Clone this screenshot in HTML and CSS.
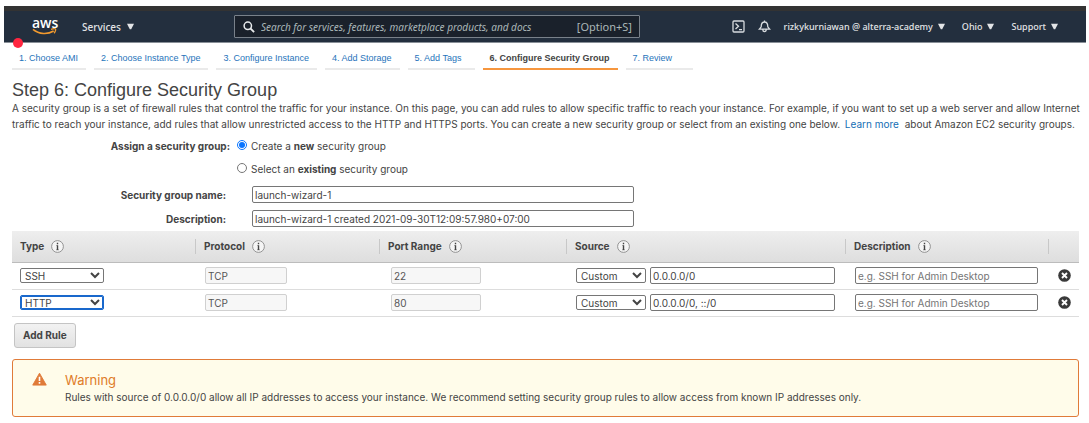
FILE: index.html
```html
<!DOCTYPE html>
<html lang="en">
<head>
<meta charset="utf-8">
<title>Step 6: Configure Security Group</title>
<link rel="stylesheet" href="styles.css">
</head>
<body>
<svg class="defs" aria-hidden="true">
  <symbol id="info" viewBox="0 0 13 13"><circle cx="6.5" cy="6.5" r="5.900" fill="#f5f5f5" stroke="#888" stroke-width=".9"/><path d="M6.500 2.800v1.500M6.500 5.200v4.800" fill="none" stroke="#444" stroke-width="1.400"/><path d="M5.400 5.500h1M5.200 9.800h2.600" stroke="#444" stroke-width=".6"/></symbol>
  <symbol id="remove" viewBox="0 0 13 13"><circle cx="6.5" cy="6.5" r="6.3" fill="#3a3a3a"/><path d="M4 4l5 5M9 4L4 9" stroke="#fff" stroke-width="1.9"/></symbol>
  <symbol id="caret" viewBox="0 0 8 7"><path d="M0 0.3h8L4.8 6.5h-1.6z" fill="#e2e4e6"/></symbol>
</svg>
<header class="topbar">
  <a class="logo" href="#" aria-label="AWS home">
    <span class="logo-text">aws</span>
    <svg class="smile" viewBox="0 0 26 8" aria-hidden="true"><path d="M1 1.2C7.500 6.500 16 6.800 22.500 3" fill="none" stroke="#f29a2e" stroke-width="1.600"/><path d="M19.800 1.300c2-.8 4.300-.9 4.700-.4s-.2 3-1.600 4.400" fill="none" stroke="#f29a2e" stroke-width="1.300"/></svg>
  </a>
  <button class="nav-button services" type="button">Services <svg class="caret" aria-hidden="true"><use href="#caret"/></svg></button>
  <label class="search">
    <svg class="search-icon" viewBox="0 0 12 12" aria-hidden="true"><circle cx="4.800" cy="4.800" r="3.700" fill="none" stroke="#e8eaec" stroke-width="1.500"/><path d="M7.500 7.500l3.600 3.600" stroke="#e8eaec" stroke-width="1.800"/></svg>
    <input class="search-input" type="search" aria-label="Search" placeholder="Search for services, features, marketplace products, and docs">
    <span class="shortcut">[Option+S]</span>
  </label>
  <nav class="account">
    <button class="nav-button" type="button" aria-label="CloudShell"><svg class="tool-icon" viewBox="0 0 13 13" fill="none" stroke="#d8dcdf" stroke-width="1.300" aria-hidden="true"><rect x="1" y="1" width="11" height="11" rx="1"/><path d="M3.500 3.500l3 2.700-3 2.700M7 9.600h3"/></svg></button>
    <button class="nav-button bell" type="button" aria-label="Notifications"><svg class="tool-icon" viewBox="0 0 13 13" fill="none" stroke="#d8dcdf" stroke-width="1.300" aria-hidden="true"><path d="M6.500 0.500v1.500M1.300 9.200h10.400L9.800 6.800C9.800 3.500 8.700 2 6.500 2S3.200 3.500 3.200 6.800zM4.800 9.500c0 2.800 3.400 2.800 3.400 0"/></svg></button>
    <button class="nav-button" type="button">rizkykurniawan @ alterra-academy <svg class="caret" aria-hidden="true"><use href="#caret"/></svg></button>
    <button class="nav-button" type="button">Ohio <svg class="caret" aria-hidden="true"><use href="#caret"/></svg></button>
    <button class="nav-button" type="button">Support <svg class="caret" aria-hidden="true"><use href="#caret"/></svg></button>
  </nav>
  <span class="marker"></span>
</header>
<nav class="steps" aria-label="Launch steps">
  <a class="step" href="#">1. Choose AMI</a>
  <a class="step" href="#">2. Choose Instance Type</a>
  <a class="step" href="#">3. Configure Instance</a>
  <a class="step" href="#">4. Add Storage</a>
  <a class="step" href="#">5. Add Tags</a>
  <a class="step current" href="#" aria-current="step">6. Configure Security Group</a>
  <a class="step" href="#">7. Review</a>
</nav>
<main class="content">
  <h1 class="title">Step 6: Configure Security Group</h1>
  <p class="intro">A security group is a set of firewall rules that control the traffic for your instance. On this page, you can add rules to allow specific traffic to reach your instance. For example, if you want to set up a web server and allow Internet traffic to reach your instance, add rules that allow unrestricted access to the HTTP and HTTPS ports. You can create a new security group or select from an existing one below. <a class="more" href="#">Learn more</a> about Amazon EC2 security groups.</p>
  <form class="group-form">
    <div class="assign" role="radiogroup" aria-labelledby="assign-label">
      <span class="assign-label" id="assign-label">Assign a security group:</span>
      <div class="choices">
        <label class="choice"><input class="radio" type="radio" name="group" checked><span>Create a <b>new</b> security group</span></label>
        <label class="choice"><input class="radio" type="radio" name="group"><span>Select an <b>existing</b> security group</span></label>
      </div>
    </div>
    <div class="field"><label class="field-label" for="name">Security group name:</label><input class="box" id="name" value="launch-wizard-1"></div>
    <div class="field"><label class="field-label" for="desc">Description:</label><input class="box" id="desc" value="launch-wizard-1 created 2021-09-30T12:09:57.980+07:00"></div>
  </form>
  <table class="rules">
    <colgroup><col class="col-type"><col class="col-protocol"><col class="col-port"><col class="col-source"><col class="col-desc"><col class="col-remove"></colgroup>
    <thead>
      <tr>
        <th><span class="head">Type <svg class="icon" aria-hidden="true"><use href="#info"/></svg></span></th>
        <th><span class="head">Protocol <svg class="icon" aria-hidden="true"><use href="#info"/></svg></span></th>
        <th><span class="head">Port Range <svg class="icon" aria-hidden="true"><use href="#info"/></svg></span></th>
        <th><span class="head">Source <svg class="icon" aria-hidden="true"><use href="#info"/></svg></span></th>
        <th><span class="head">Description <svg class="icon" aria-hidden="true"><use href="#info"/></svg></span></th>
        <th></th>
      </tr>
    </thead>
    <tbody>
      <tr>
        <td><select class="select type" aria-label="Type"><option>SSH</option></select></td>
        <td><input class="box protocol" aria-label="Protocol" value="TCP" disabled></td>
        <td class="port-cell"><input class="box port" aria-label="Port range" value="22" disabled></td>
        <td><div class="source"><select class="select" aria-label="Source type"><option>Custom</option></select><input class="box" aria-label="Source" value="0.0.0.0/0"></div></td>
        <td><input class="box note" aria-label="Description" placeholder="e.g. SSH for Admin Desktop"></td>
        <td><button class="remove" type="button" aria-label="Remove rule"><svg class="icon" aria-hidden="true"><use href="#remove"/></svg></button></td>
      </tr>
      <tr>
        <td><select class="select type active" aria-label="Type"><option>HTTP</option></select></td>
        <td><input class="box protocol" aria-label="Protocol" value="TCP" disabled></td>
        <td class="port-cell"><input class="box port" aria-label="Port range" value="80" disabled></td>
        <td><div class="source"><select class="select" aria-label="Source type"><option>Custom</option></select><input class="box" aria-label="Source" value="0.0.0.0/0, ::/0"></div></td>
        <td><input class="box note" aria-label="Description" placeholder="e.g. SSH for Admin Desktop"></td>
        <td><button class="remove" type="button" aria-label="Remove rule"><svg class="icon" aria-hidden="true"><use href="#remove"/></svg></button></td>
      </tr>
    </tbody>
  </table>
  <button class="add" type="button">Add Rule</button>
  <section class="warning">
    <svg class="warning-icon" viewBox="0 0 16 14" aria-hidden="true"><path d="M8 .8L15.200 13.500H.8z" fill="#e07b39" stroke="#e07b39" stroke-linejoin="round"/><path d="M8 4.500v4.500M8 10.300v1.800" stroke="#fff" stroke-width="1.700"/></svg>
    <div>
      <h2 class="warning-title">Warning</h2>
      <p class="warning-text">Rules with source of 0.0.0.0/0 allow all IP addresses to access your instance. We recommend setting security group rules to allow access from known IP addresses only.</p>
    </div>
  </section>
</main>
</body>
</html>
```
FILE: styles.css
```css
* { box-sizing: border-box; }
body {
  margin: 0;
  padding-top: 6px;
  background: #fff;
  color: #444;
  font: 10px/16px Inter, "Liberation Sans", Arial, sans-serif;
}
h1, h2, p { margin: 0; font-weight: normal; }
button, input, select { font: inherit; color: inherit; }
.defs { position: absolute; width: 0; height: 0; }

.topbar {
  position: relative;
  display: flex;
  align-items: center;
  height: 37px;
  margin: 0 3px 0 4px;
  padding: 0 28px;
  background: #232f3e;
  border-top: 5px solid #333;
  border-bottom: 1px solid #899098;
  color: #e2e4e6;
  font-family: "Noto Sans", sans-serif;
  font-size: 9px;
}
.logo { display: flex; flex-direction: column; width: 25px; color: #fff; text-decoration: none; }
.logo-text { font: 600 14px/11px "Open Sans", sans-serif; text-align: center; }
.smile { width: 25px; height: 8px; }
.nav-button {
  display: flex;
  align-items: center;
  gap: 5px;
  padding: 0;
  border: 0;
  background: none;
  font-weight: 500;
  white-space: nowrap;
}
.services { gap: 6px; margin-left: 25px; font-size: 10px; }
.caret { width: 7px; height: 7px; }
.search {
  display: flex;
  align-items: center;
  width: 406px;
  height: 23px;
  margin-left: 100px;
  padding: 0 7px 0 8px;
  background: #1a212b;
  border: 1px solid #79818a;
  border-radius: 1px;
  font-size: 10px;
}
.search-icon { flex: none; width: 12px; height: 12px; }
.search-input { flex: 1; min-width: 0; padding: 0; margin-left: 6px; border: 0; background: none; }
.search-input::placeholder { color: #aab7b8; font-style: italic; }
.shortcut { color: #aab7b8; font-size: 11px; }
.account { display: flex; align-items: center; gap: 17px; margin-left: auto; }
.bell { margin: 0 -4px; }
.tool-icon { width: 13px; height: 13px; }
.marker { position: absolute; left: 9px; bottom: -6px; width: 10px; height: 10px; border-radius: 50%; background: #ff2640; }

.steps { display: flex; gap: 8px; padding: 7px 12px 0; font-family: "Liberation Sans", Arial, sans-serif; font-size: 9px; }
.step {
  min-width: 67px;
  padding: 0 8px 2px 7px;
  border-bottom: 2px solid #eaeaea;
  color: #1f74bb;
  line-height: 16px;
  text-decoration: none;
  white-space: nowrap;
}
.step.current { border-color: #f6963e; color: #444; font-weight: bold; }

.content { padding: 10px 10px 0 12px; }
.title { font-family: "Liberation Sans", Arial, sans-serif; font-size: 18px; line-height: 20px; }
.intro { margin-right: -8px; }
.more { margin-right: 3px; margin-left: 2px; color: #146eb4; text-decoration: none; }
.group-form { display: flex; flex-direction: column; margin-top: 6px; }
.assign { display: flex; gap: 7px; margin-bottom: 9px; }
.assign-label { width: 218px; font-weight: bold; text-align: right; }
.choices { display: flex; flex-direction: column; gap: 7px; }
.choice { display: flex; gap: 4px; }
.radio { width: 10px; height: 10px; margin: 2px 0 0; accent-color: #0a75ff; }
.field { display: flex; align-items: center; margin-bottom: 7px; }
.field-label { width: 214px; margin-right: 26px; font-weight: bold; text-align: right; }
.box { width: 382px; height: 17px; padding: 0 2px; border: 1px solid #767676; border-radius: 2px; background: #fff; }
.box:disabled { border-color: #d0d0d0; background: #f7f7f7; color: #555; }
.box::placeholder { color: #757575; }

.rules { width: 100%; table-layout: fixed; border-collapse: collapse; margin-top: -3px; }
.rules thead { background: linear-gradient(#eee, #dedede); }
.col-type, .col-protocol { width: 184px; }
.col-port { width: 187px; }
.col-source { width: 279px; }
.col-desc { width: 203px; }
.col-remove { width: 30px; }
.rules th { height: 31px; padding: 0 8px; border-bottom: 1px solid #bcbcbc; text-align: left; }
.rules th:not(:last-child) { background: linear-gradient(#c8c8c8, #c8c8c8) right center / 1px 15px no-repeat; }
.rules td { height: 27px; padding: 0 11px 0 9px; border-bottom: 1px solid #ddd; }
.rules td:first-child { padding-left: 8px; }
.rules td.port-cell { padding-left: 11px; }
.rules td:last-child { padding: 0; }
.head { display: flex; align-items: center; gap: 7px; }
.icon { display: block; width: 13px; height: 13px; }
.select {
  width: 70px;
  height: 15px;
  padding: 0;
  border: 1px solid #767676;
  border-radius: 2px;
  background-color: #fff;
}
.select.type { width: 84px; }
.select.active { border-color: #1968cc; box-shadow: inset 0 0 0 1px #1968cc; }
.rules input, .select { display: block; }
.protocol { width: 82px; }
.port { width: 90px; }
.source { display: flex; align-items: center; gap: 4px; }
.source .box { flex: 1; min-width: 0; }
.note { width: 100%; }
.remove { display: block; margin: 0 auto; padding: 0; border: 0; background: none; }

.add {
  height: 25px;
  margin: 6px 2px 11px;
  padding: 0 8px;
  border: 1px solid #c4c4c4;
  border-radius: 3px;
  background: linear-gradient(#f2f2f2, #e2e2e2);
  font-weight: bold;
}
.warning {
  display: flex;
  gap: 18px;
  padding: 12px 19px 11px;
  border: 1px solid #e07b39;
  border-radius: 3px;
  background: #fffcea;
}
.warning-icon { flex: none; width: 15px; height: 14px; }
.warning-title { color: #e07b28; font-size: 13px; line-height: 17px; }
```
